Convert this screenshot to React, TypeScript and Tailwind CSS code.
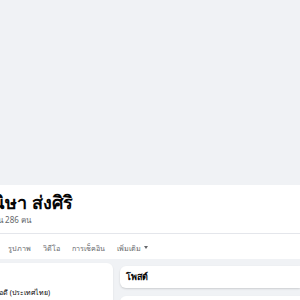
const tabs = ["รูปภาพ", "วิดีโอ", "การเช็คอิน"];

export default function App() {
  return (
    <div
      className="w-[300px] h-[300px] overflow-hidden bg-[#f0f2f5] text-[#050505]"
      style={{ fontFamily: '"Noto Sans", "Liberation Sans", sans-serif' }}
    >
      {/* cover */}
      <div className="h-[185px] bg-[#f0f2f5]" />

      {/* header */}
      <div className="bg-white h-[74px]">
        <div className="h-[49px] pt-[5px] border-b border-[#e4e6eb] -ml-[12px]">
          <h1 className="text-[18px] font-bold leading-[24px] whitespace-nowrap">
            ณิษา ส่งศิริ
          </h1>
          <p className="text-[8px] leading-[12px] text-[#65676b] whitespace-nowrap -ml-[3px]">
            เพื่อน 286 คน
          </p>
        </div>
        <div className="flex items-center h-[24px] pl-[8px] pt-[4px] gap-[12px] text-[7.2px] text-[#65676b] whitespace-nowrap">
          {tabs.map((t) => (
            <span key={t}>{t}</span>
          ))}
          <span className="flex items-center gap-[3px]">
            เพิ่มเติม
            <span className="w-0 h-0 border-l-[2.5px] border-r-[2.5px] border-t-[3px] border-l-transparent border-r-transparent border-t-[#65676b]" />
          </span>
        </div>
      </div>

      {/* body */}
      <div className="flex gap-[7px] pt-[4px]">
        <div className="w-[113px] h-[60px] bg-white rounded-r-[6px] shadow-[0_1px_2px_rgba(0,0,0,0.1)] pt-[25px]">
          <p className="text-[7px] text-[#050505] whitespace-nowrap -ml-[14px]">
            ซัลไอดี (ประเทศไทย)
          </p>
        </div>
        <div className="flex-1 flex flex-col gap-[8px] pt-[3px]">
          <div className="h-[22px] bg-white rounded-l-[6px] shadow-[0_1px_2px_rgba(0,0,0,0.15)] flex items-center pl-[6px]">
            <span className="text-[9px] font-bold">โพสต์</span>
          </div>
          <div className="h-[40px] bg-white rounded-l-[6px] shadow-[0_1px_2px_rgba(0,0,0,0.1)]" />
        </div>
      </div>
    </div>
  );
}
